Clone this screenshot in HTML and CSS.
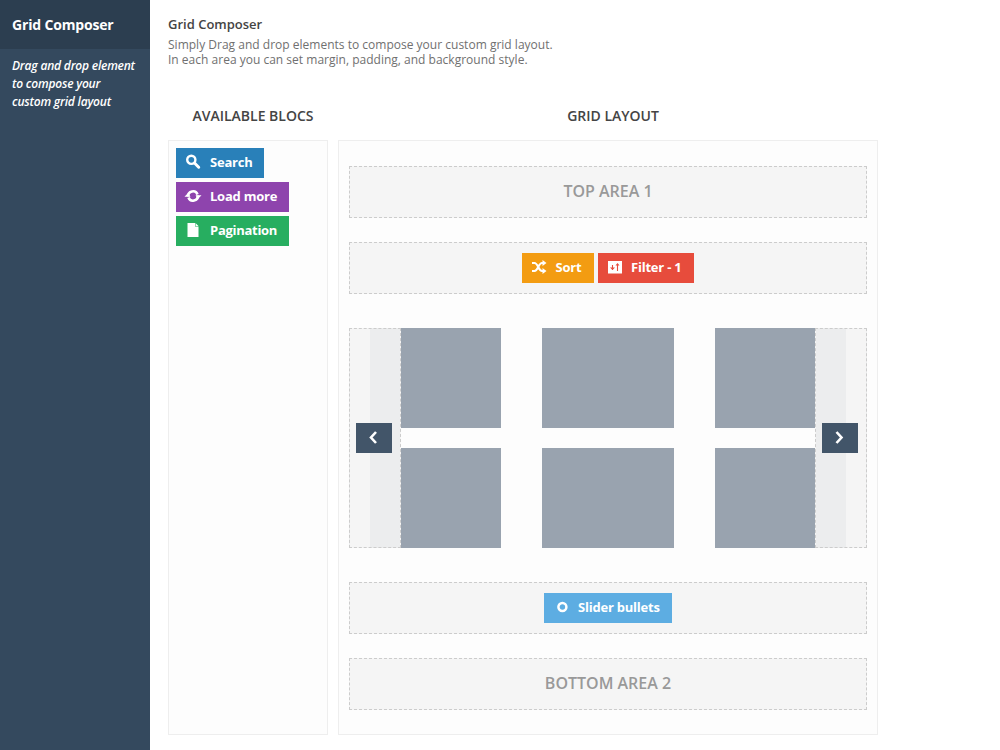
FILE: index.html
```html
<!DOCTYPE html>
<html lang="en">
<head>
<meta charset="utf-8">
<title>Grid Composer</title>
<link rel="stylesheet" href="styles.css">
</head>
<body>
<div class="app">
  <aside class="sidebar">
    <h1 class="sidebar-title">Grid Composer</h1>
    <p class="sidebar-text">Drag and drop element<br>to compose your<br>custom grid layout</p>
  </aside>
  <main class="content">
    <header class="intro">
      <h2 class="intro-title">Grid Composer</h2>
      <p class="intro-text">Simply Drag and drop elements to compose your custom grid layout.<br>In each area you can set margin, padding, and background style.</p>
    </header>
    <div class="columns">
      <section class="column column-blocs">
        <h3 class="column-title">AVAILABLE BLOCS</h3>
        <div class="panel panel-blocs">
          <div class="bloc bloc-search"><svg class="icon" viewBox="0 0 16 16"><circle cx="6.300" cy="5.800" r="4.100" fill="none" stroke="#fff" stroke-width="2.4"/><path d="M9.5 9L13.700 13.200" stroke="#fff" stroke-width="3" stroke-linecap="round"/></svg><span>Search</span></div>
          <div class="bloc bloc-more"><svg class="icon" viewBox="0 0 16 16"><path d="M3.200 8.500A4.800 4.800 0 0 1 12.500 6.500M12.800 7.500A4.800 4.800 0 0 1 3.500 9.500" fill="none" stroke="#fff" stroke-width="2.600"/><path d="M-0.500 8.800L3 5L5.500 8.800ZM10.500 7.200H16.500L13 11Z" fill="#fff"/></svg><span>Load more</span></div>
          <div class="bloc bloc-pagination"><svg class="icon" viewBox="0 0 16 16"><path d="M2.500 1H10V4.500H13.500V15H2.500ZM10.500 1L13.500 4H10.500Z" fill="#fff"/></svg><span>Pagination</span></div>
        </div>
      </section>
      <section class="column column-layout">
        <h3 class="column-title">GRID LAYOUT</h3>
        <div class="panel panel-layout">
          <div class="area">TOP AREA 1</div>
          <div class="area">
            <div class="bloc bloc-sort"><svg class="icon" viewBox="0 0 16 16"><path d="M1 4H3.5C7 4 7.500 12 11 12H12M1 12H3.500C7 12 7.500 4 11 4H12" fill="none" stroke="#fff" stroke-width="2"/><path d="M11.500 1L15.500 4L11.500 7ZM11.500 9L15.500 12L11.500 15Z" fill="#fff"/></svg><span>Sort</span></div>
            <div class="bloc bloc-filter"><svg class="icon" viewBox="0 0 16 16"><rect x="2" y="2" width="14" height="12.500" fill="#fff"/><path d="M6.500 6V11M11.500 5V12" fill="none" stroke="#e74c3c" stroke-width="1.100"/><path d="M4 8.500H9L6.500 11ZM9.500 6.500H13.500L11.500 4Z" fill="#e74c3c"/></svg><span>Filter - 1</span></div>
          </div>
          <div class="slider">
            <div class="cells">
              <div class="cell"></div><div class="cell"></div><div class="cell"></div>
              <div class="cell"></div><div class="cell"></div><div class="cell"></div>
            </div>
            <div class="side side-left"><div class="arrow"><svg class="icon" viewBox="0 0 16 16"><path d="M10 2L5 7.500L10 13" fill="none" stroke="#fff" stroke-width="2.600"/></svg></div></div>
            <div class="side side-right"><div class="arrow"><svg class="icon" viewBox="0 0 16 16"><path d="M4.500 2L9.500 7.500L4.500 13" fill="none" stroke="#fff" stroke-width="2.600"/></svg></div></div>
          </div>
          <div class="area">
            <div class="bloc bloc-bullets"><svg class="icon" viewBox="0 0 16 16"><circle cx="9.400" cy="8" r="4" fill="none" stroke="#fff" stroke-width="2.500"/></svg><span>Slider bullets</span></div>
          </div>
          <div class="area">BOTTOM AREA 2</div>
        </div>
      </section>
    </div>
  </main>
</div>
</body>
</html>
```
FILE: styles.css
```css
* { box-sizing: border-box; }
body { margin: 0; background: #fff; color: #444; font-family: "Open Sans", sans-serif; }
h1, h2, h3, p { margin: 0; white-space: nowrap; }
.app { display: flex; height: 750px; overflow: hidden; }
.sidebar { width: 150px; flex: none; background: #34495e; color: #fff; }
.sidebar-title { height: 49px; padding-left: 12px; background: #2c3e50; font-size: 14px; font-weight: 700; line-height: 49px; letter-spacing: -0.17px; }
.sidebar-text { padding: 8px 12px; font-size: 12px; font-style: italic; font-weight: 600; line-height: 18px; letter-spacing: -0.2px; }
.content { flex: 1; padding: 15px 0 0 18px; }
.intro { height: 88px; }
.intro-title { font-size: 13px; font-weight: 600; line-height: 19px; }
.intro-text { margin-top: 3px; color: #707070; font-size: 12px; line-height: 15px; letter-spacing: 0.01px; }
.columns { display: flex; gap: 10px; }
.column-blocs { width: 160px; }
.column-layout { width: 540px; }
.column-title { height: 37px; padding-left: 10px; font-size: 14px; font-weight: 600; line-height: 26px; text-align: center; }
.panel { height: 595px; border: 1px solid #eee; background: #fdfdfd; }
.panel-blocs { display: flex; flex-direction: column; align-items: flex-start; gap: 4px; padding: 7px; }
.panel-layout { display: flex; flex-direction: column; gap: 24px; padding: 25px 10px; }
.area { display: flex; align-items: center; justify-content: center; gap: 4px; height: 52px; flex: none; padding-bottom: 2px; border: 1px dashed #ccc; background: #f5f5f5; color: #999; font-size: 16px; font-weight: 600; line-height: 48px; }
.area:has(.bloc) { padding-bottom: 0; }
.bloc { display: flex; align-items: center; height: 30px; padding: 0 0 2px 9px; color: #fff; font-size: 13px; font-weight: 700; line-height: 28px; letter-spacing: -0.22px; white-space: nowrap; }
.icon { display: block; flex: none; width: 16px; height: 16px; overflow: visible; }
.bloc .icon { margin-right: 9px; }
.bloc-search { width: 88px; background: #2980b9; }
.bloc-more { width: 113px; background: #8e44ad; }
.bloc-pagination { width: 113px; background: #27ae60; letter-spacing: -0.28px; }
.bloc-sort { width: 72px; padding-left: 8.5px; background: #f39c12; }
.bloc-filter { width: 96px; padding-left: 8px; background: #e74c3c; }
.bloc-bullets { width: 128px; background: #5dade2; }
.slider { position: relative; height: 220px; margin: 10px 0; flex: none; }
.cells { display: grid; grid-template-columns: 131px 132px 131px; gap: 20px 41px; padding-left: 21px; }
.cell { height: 100px; background: #99a3af; }
.side { position: absolute; top: 0; display: flex; align-items: center; width: 52px; height: 220px; border: 1px dashed #ccc; }
.side-left { left: 0; padding-left: 6px; background: linear-gradient(90deg, #f5f5f5 20px, #ecedee 20px); }
.side-right { right: 0; padding-left: 6px; background: linear-gradient(270deg, #f5f5f5 20px, #ecedee 20px); }
.arrow { display: flex; align-items: center; justify-content: center; width: 36px; height: 30px; background: #425569; }
```
